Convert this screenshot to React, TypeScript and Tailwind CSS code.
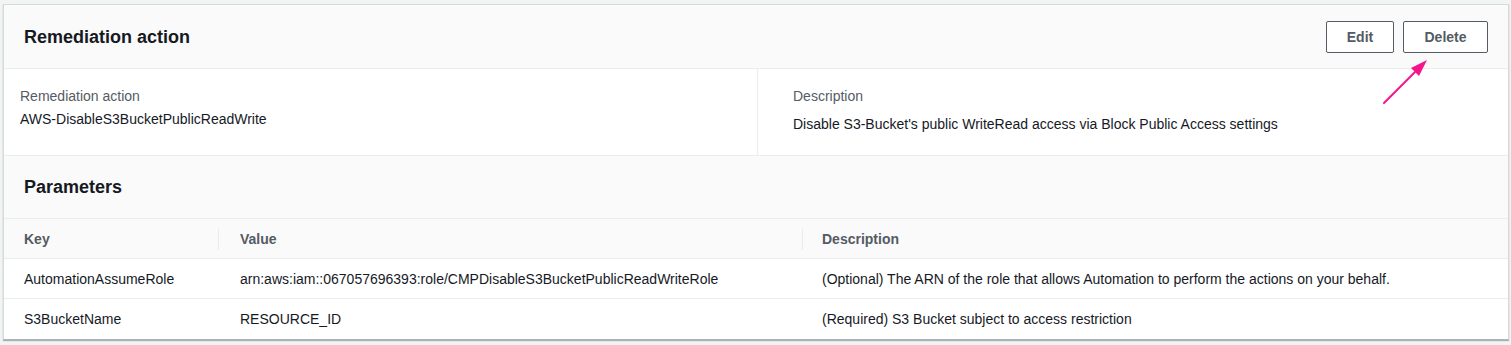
import React from 'react';

const font = { fontFamily: '"Liberation Sans", Arial, sans-serif' };

const params = [
  {
    key: 'AutomationAssumeRole',
    value: 'arn:aws:iam::067057696393:role/CMPDisableS3BucketPublicReadWriteRole',
    description: '(Optional) The ARN of the role that allows Automation to perform the actions on your behalf.',
  },
  {
    key: 'S3BucketName',
    value: 'RESOURCE_ID',
    description: '(Required) S3 Bucket subject to access restriction',
  },
];

const App: React.FC = () => {
  return (
    <div className="min-h-screen bg-[#f2f3f3] pt-[4px] pl-[3px] pr-[2px] text-[14px] leading-[20px] text-[#16191f]" style={font}>
      <div className="relative bg-white border border-[#d5dbdb] border-b-[#aab7b8] shadow-[0_1px_1px_0_rgba(0,28,36,0.3)]">

        {/* Header */}
        <div className="flex items-center justify-between h-[64px] bg-[#fafafa] border-b border-[#eaeded] pl-[20px] pr-[20px]">
          <h2 className="text-[18px] leading-[22px] font-bold text-[#16191f]">Remediation action</h2>
          <div className="flex items-center gap-[9px]">
            <button className="w-[68px] h-[32px] border border-[#545b64] rounded-[2px] bg-white text-[14px] font-bold text-[#545b64]">
              Edit
            </button>
            <button className="w-[85px] h-[32px] border border-[#545b64] rounded-[2px] bg-white text-[14px] font-bold text-[#545b64]">
              Delete
            </button>
          </div>
        </div>

        {/* Details */}
        <div className="grid grid-cols-[753px_1fr] h-[87px] border-b border-[#eaeded]">
          <div className="pl-[16px] pt-[17px]">
            <div className="text-[#545b64]">Remediation action</div>
            <div className="mt-[3px]">AWS-DisableS3BucketPublicReadWrite</div>
          </div>
          <div className="border-l border-[#eaeded] pl-[35px] pt-[17px]">
            <div className="text-[#545b64]">Description</div>
            <div className="mt-[8px]">Disable S3-Bucket's public WriteRead access via Block Public Access settings</div>
          </div>
        </div>

        {/* Parameters header */}
        <div className="flex items-center h-[63px] bg-[#fafafa] border-b border-[#eaeded] pl-[20px]">
          <h2 className="text-[18px] leading-[22px] font-bold text-[#16191f]">Parameters</h2>
        </div>

        {/* Table */}
        <div className="grid grid-cols-[214px_584px_1fr] h-[40px] items-center bg-[#fafafa] border-b border-[#eaeded] font-bold text-[#545b64]">
          <div className="pl-[20px]">Key</div>
          <div className="border-l border-[#eaeded] pl-[21px] h-[22px] flex items-center">Value</div>
          <div className="border-l border-[#eaeded] pl-[19px] h-[22px] flex items-center">Description</div>
        </div>
        {params.map((p, i) => (
          <div
            key={p.key}
            className={`grid grid-cols-[214px_584px_1fr] h-[40px] items-center ${i < params.length - 1 ? 'border-b border-[#eaeded]' : ''}`}
          >
            <div className="pl-[20px]">{p.key}</div>
            <div className="pl-[22px]">{p.value}</div>
            <div className="pl-[20px]">{p.description}</div>
          </div>
        ))}

        {/* annotation arrow */}
        <svg className="absolute left-[1376px] top-[50px]" width="56" height="56" viewBox="0 0 56 56">
          <line x1="4" y1="48" x2="40" y2="12" stroke="#f5148c" strokeWidth="2" strokeLinecap="round" />
          <polygon points="47,5 31,13 39,21" fill="#f5148c" />
        </svg>
      </div>
    </div>
  );
};

export default App;
